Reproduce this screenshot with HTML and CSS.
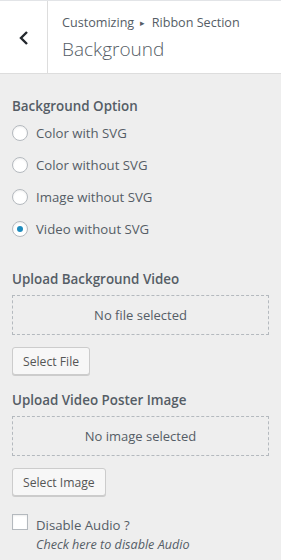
FILE: index.html
```html
<!DOCTYPE html>
<html lang="en">
<head>
    <meta charset="UTF-8">
    <meta name="viewport" content="width=device-width, initial-scale=1.0">
    <title>Customizing - Background</title>
    <link rel="stylesheet" href="styles.css">
</head>
<body>

    <div class="panel-header">
        <button class="back-button" type="button" aria-label="Back">
            <svg width="14" height="16" viewBox="0 0 14 16">
                <polyline points="10,2 4,8 10,14" fill="none" stroke="#23282d" stroke-width="2.4"/>
            </svg>
        </button>
        <div class="panel-title">
            <span class="breadcrumb">Customizing <span class="sep">&#9656;</span> Ribbon Section</span>
            <h3 class="title">Background</h3>
        </div>
    </div>

    <div class="controls">
        <!-- Background option -->
        <div class="control">
            <span class="control-title">Background Option</span>
            <label class="radio-row"><input type="radio" name="bg"> Color with SVG</label>
            <label class="radio-row"><input type="radio" name="bg"> Color without SVG</label>
            <label class="radio-row"><input type="radio" name="bg"> Image without SVG</label>
            <label class="radio-row"><input type="radio" name="bg" checked> Video without SVG</label>
        </div>

        <!-- Video upload -->
        <div class="control upload">
            <span class="control-title">Upload Background Video</span>
            <div class="placeholder">No file selected</div>
            <button class="button" type="button">Select File</button>
        </div>

        <!-- Poster image -->
        <div class="control upload">
            <span class="control-title">Upload Video Poster Image</span>
            <div class="placeholder">No image selected</div>
            <button class="button" type="button">Select Image</button>
        </div>

        <div class="control checkbox-control">
            <label class="checkbox-row"><input type="checkbox"> Disable Audio ?</label>
            <span class="description">Check here to disable Audio</span>
        </div>
    </div>

</body>
</html>
```

FILE: styles.css
```css
body {
    margin: 0;
    font-family: "Open Sans", "Noto Sans", sans-serif;
    font-size: 13px;
    color: #555d66;
    background-color: #eeeeee;
    min-height: 100vh;
}

.panel-header {
    display: flex;
    height: 72px;
    background: #fff;
    border-top: 1px solid #e2e4e7;
    border-bottom: 1px solid #dddddd;
}

.back-button {
    width: 48px;
    padding: 0;
    border: none;
    border-right: 1px solid #dddddd;
    background: #fff;
    display: flex;
    align-items: center;
    justify-content: center;
    padding-top: 2px;
}

.panel-title {
    padding: 13px 0 0 14px;
}

.breadcrumb {
    display: block;
    font-size: 12.6px;
    line-height: 18px;
}

.sep {
    font-size: 9px;
    padding: 0 3px;
    vertical-align: 1px;
}

.title {
    margin: 4px 0 0;
    font-size: 19px;
    font-weight: 300;
    line-height: 26px;
    color: #555d66;
}

.controls {
    padding: 22px 12px 0;
}

.control-title {
    display: block;
    font-size: 13.4px;
    font-weight: 600;
    line-height: 20px;
    margin-bottom: 1px;
}

.radio-row,
.checkbox-row {
    display: flex;
    align-items: center;
    height: 32px;
    font-size: 13.2px;
}

input[type="radio"],
input[type="checkbox"] {
    -webkit-appearance: none;
    appearance: none;
    width: 16px;
    height: 16px;
    margin: 0 8px 0 0;
    border: 1px solid #b4b9be;
    background: #fff;
    box-shadow: inset 0 1px 2px rgba(0, 0, 0, 0.07);
    flex-shrink: 0;
}

input[type="radio"] {
    border-radius: 50%;
    display: grid;
    place-items: center;
}

input[type="radio"]:checked::before {
    content: "";
    width: 6px;
    height: 6px;
    border-radius: 50%;
    background: #1e8cbe;
}

.upload {
    margin-top: 24px;
}

.upload + .upload {
    margin-top: 15px;
}

.upload .control-title {
    margin-bottom: 6px;
}

.placeholder {
    height: 38px;
    border: 1px dashed #b4b9be;
    display: flex;
    align-items: center;
    justify-content: center;
    font-size: 13px;
}

.button {
    margin-top: 12px;
    height: 28px;
    padding: 0 10px;
    font-family: inherit;
    font-size: 12.2px;
    color: #555555;
    background: #f7f7f7;
    border: 1px solid #cccccc;
    border-radius: 3px;
    box-shadow: 0 1px 0 #cccccc;
}

.checkbox-control {
    margin-top: 14px;
}

.checkbox-row {
    height: 20px;
    align-items: flex-start;
    padding-top: 6px;
}

.checkbox-row input {
    margin-top: -2px;
    border-radius: 0;
}

.description {
    display: block;
    padding-left: 24px;
    font-style: italic;
    font-size: 12.6px;
    line-height: 18px;
}
```
